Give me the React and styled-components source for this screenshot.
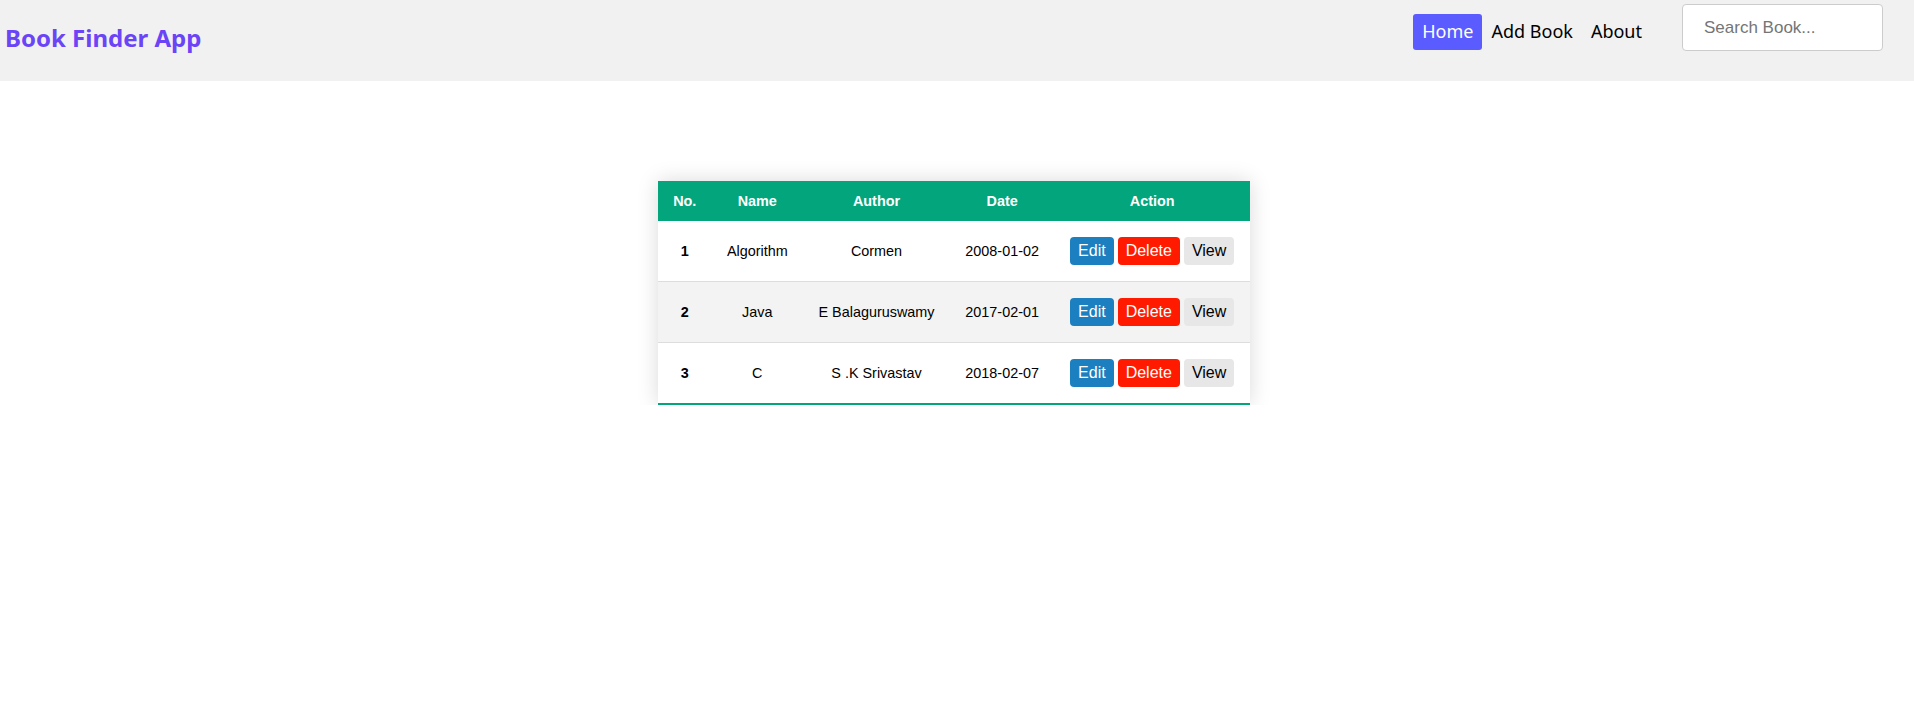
import React from 'react';
import styled, { createGlobalStyle } from 'styled-components';

const GlobalStyle = createGlobalStyle`
  body {
    margin: 0;
    background: #ffffff;
    font-family: "Liberation Sans", Arial, sans-serif;
  }
`;

const books = [
  { id: 1, name: 'Algorithm', author: 'Cormen', date: '2008-01-02' },
  { id: 2, name: 'Java', author: 'E Balaguruswamy', date: '2017-02-01' },
  { id: 3, name: 'C', author: 'S .K Srivastav', date: '2018-02-07' },
];

function NavBar() {
  return (
    <Header>
      <Brand>Book Finder App</Brand>
      <RightSide>
        <NavLinks>
          <NavLink $active>Home</NavLink>
          <NavLink>Add Book</NavLink>
          <NavLink>About</NavLink>
        </NavLinks>
        <SearchInput placeholder="Search Book..." />
      </RightSide>
    </Header>
  );
}

function BookTable() {
  return (
    <Table>
      <thead>
        <HeadRow>
          <TableHeader>No.</TableHeader>
          <TableHeader>Name</TableHeader>
          <TableHeader>Author</TableHeader>
          <TableHeader>Date</TableHeader>
          <TableHeader>Action</TableHeader>
        </HeadRow>
      </thead>
      <tbody>
        {books.map((book) => (
          <TableRow key={book.id}>
            <TableCell $bold>{book.id}</TableCell>
            <TableCell>{book.name}</TableCell>
            <TableCell>{book.author}</TableCell>
            <TableCell>{book.date}</TableCell>
            <TableCell>
              <Actions>
                <ActionButton $kind="edit">Edit</ActionButton>
                <ActionButton $kind="delete">Delete</ActionButton>
                <ActionButton $kind="view">View</ActionButton>
              </Actions>
            </TableCell>
          </TableRow>
        ))}
      </tbody>
    </Table>
  );
}

export default function App() {
  return (
    <>
      <GlobalStyle />
      <NavBar />
      <Main>
        <BookTable />
      </Main>
    </>
  );
}

const Header = styled.header`
  display: flex;
  justify-content: space-between;
  align-items: flex-start;
  height: 81px;
  padding: 0 31px 0 5px;
  background-color: #f1f1f1;
  box-sizing: border-box;
`;

const Brand = styled.div`
  margin-top: 21px;
  font-family: "Noto Sans", "Open Sans", sans-serif;
  font-size: 24px;
  font-weight: bold;
  color: #6a44f6;
`;

const RightSide = styled.div`
  display: flex;
  align-items: flex-start;
  gap: 31px;
`;

const NavLinks = styled.nav`
  display: flex;
  margin-top: 14px;
`;

const NavLink = styled.a`
  display: block;
  height: 36px;
  line-height: 34px;
  padding: 0 9px;
  border-radius: 3px;
  font-family: "Noto Sans", "Open Sans", sans-serif;
  font-size: 18px;
  color: ${(p) => (p.$active ? '#ffffff' : '#000000')};
  background-color: ${(p) => (p.$active ? '#5a5cff' : 'transparent')};
  cursor: pointer;
`;

const SearchInput = styled.input`
  margin-top: 4px;
  width: 201px;
  height: 47px;
  padding: 0 21px;
  box-sizing: border-box;
  border: 1px solid #cccccc;
  border-radius: 4px;
  background: #ffffff;
  font-family: "Liberation Sans", Arial, sans-serif;
  font-size: 17px;
  outline: none;

  &::placeholder {
    color: #757575;
  }
`;

const Main = styled.main`
  display: flex;
  justify-content: center;
  padding: 100px 6px 0 0;
`;

const Table = styled.table`
  width: 592px;
  border-collapse: collapse;
  font-size: 14.4px;
  background-color: #ffffff;
  box-shadow: 0 0 20px rgba(0, 0, 0, 0.15);
`;

const HeadRow = styled.tr`
  background-color: #02a57c;
  color: #ffffff;
`;

const TableHeader = styled.th`
  height: 40px;
  padding: 0 15px;
  text-align: center;
  font-weight: bold;
`;

const TableRow = styled.tr`
  border-bottom: 1px solid #dddddd;

  &:nth-of-type(even) {
    background-color: #f3f3f3;
  }

  &:last-of-type {
    border-bottom: 2px solid #02a57c;
  }
`;

const TableCell = styled.td`
  height: 60px;
  padding: 0 15px;
  text-align: center;
  color: #000000;
  white-space: nowrap;
  font-weight: ${(p) => (p.$bold ? 'bold' : 'normal')};
`;

const Actions = styled.div`
  display: flex;
  justify-content: center;
  gap: 4px;
`;

const buttonColors = {
  edit: { bg: '#1b7fc0', fg: '#ffffff' },
  delete: { bg: '#ff1a00', fg: '#ffffff' },
  view: { bg: '#e7e7e7', fg: '#000000' },
};

const ActionButton = styled.button`
  height: 28px;
  padding: 0 8px;
  border: none;
  border-radius: 4px;
  font-family: "Liberation Sans", Arial, sans-serif;
  font-size: 16px;
  color: ${(p) => buttonColors[p.$kind].fg};
  background-color: ${(p) => buttonColors[p.$kind].bg};
  cursor: pointer;
`;
